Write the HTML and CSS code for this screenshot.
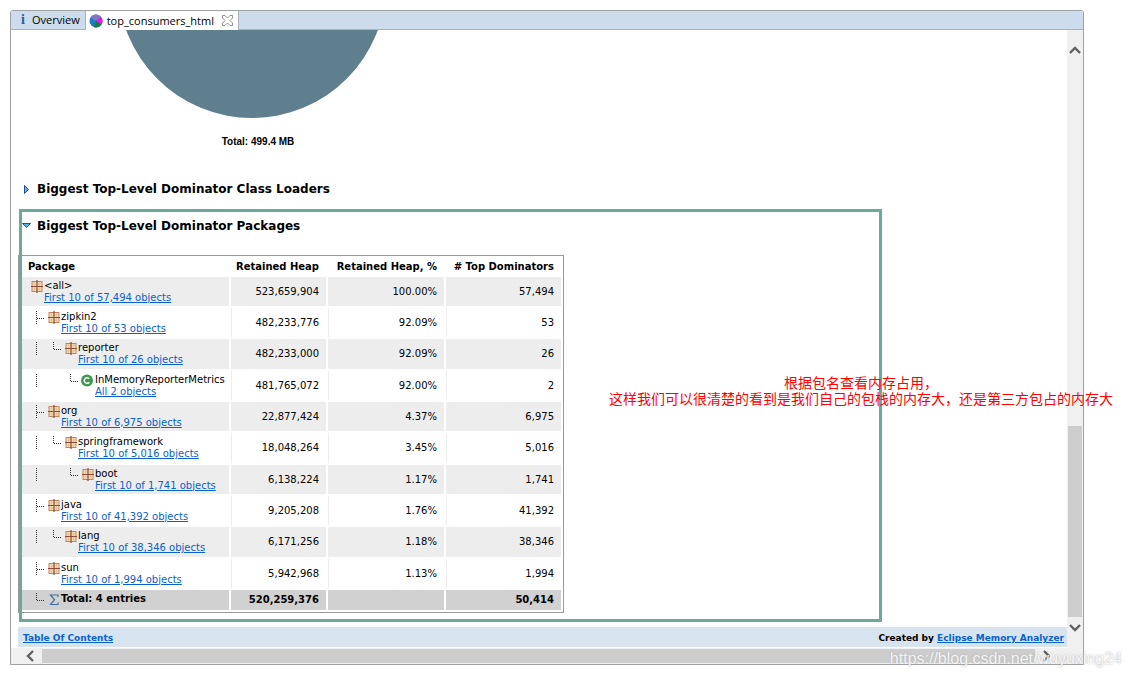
FILE: index.html
```html
<!DOCTYPE html>
<html lang="en">
<head>
<meta charset="utf-8">
<title>top_consumers_html</title>
<link rel="stylesheet" href="styles.css">
</head>
<body>
<svg class="defs" aria-hidden="true">
  <symbol id="pkg" viewBox="0 0 16 14">
    <rect x="4" y="1.500" width="10" height="10" fill="#f6dcb4" stroke="#bf8560"/>
    <path d="M6.500 2v9M11.500 2v9M4.500 4h9M4.500 9h9" stroke="#e3b98c" stroke-width=".6"/>
    <path d="M9 0v13M3 6.500h12" stroke="#8d4b38" stroke-width="1.200"/>
  </symbol>
  <symbol id="cls" viewBox="0 0 16 14">
    <circle cx="8" cy="6.500" r="6" fill="#3c9a4c"/>
    <path d="M10.300 4.800A2.800 2.800 0 1 0 10.300 8.200" fill="none" stroke="#fff" stroke-width="1.500"/>
  </symbol>
  <symbol id="sum" viewBox="0 0 16 14">
    <path d="M13 4V2H5.500L9.500 6.800L5.500 11.500H13V9.500" fill="none" stroke="#3f6fa5" stroke-width="1.200"/>
  </symbol>
  <symbol id="line" viewBox="0 0 20 16"><path d="M8.500 0v14" stroke="#333" stroke-dasharray="1 1"/></symbol>
  <symbol id="tee" viewBox="0 0 20 16"><path d="M8.500 0v14M9 7.500h9" stroke="#333" stroke-dasharray="1 1"/></symbol>
  <symbol id="elbow" viewBox="0 0 20 16"><path d="M8.500 0v8M9 7.500h9" stroke="#333" stroke-dasharray="1 1"/></symbol>
</svg>

<div class="window">
  <nav class="tabs">
    <button class="tab"><span class="info">i</span>Overview</button>
    <button class="tab active">
      <svg width="14" height="14" viewBox="0 0 14 14"><circle cx="7" cy="7" r="6.500" fill="#1c7cc4"/><path d="M7 7L1.500 3.500A6.500 6.500 0 0 1 12 3z" fill="#8377c4"/><path d="M7 7L12 3A6.500 6.500 0 0 1 12.500 10.500z" fill="#f412e8"/><path d="M7 7L12.500 10.500A6.500 6.500 0 0 1 5 13.200z" fill="#157a4c"/></svg>
      top_consumers_html
      <svg class="close" width="11" height="11" viewBox="0 0 11 11"><path d="M.5 .5h2.500L5.500 3L8 .5h2.500V3L8 5.500L10.500 8v2.500H8L5.500 8L3 10.500H.5V8L3 5.500L.5 3z" fill="#fff" stroke="#777" stroke-width=".8"/></svg>
    </button>
  </nav>

  <div class="view">
    <main class="report">
      <figure class="chart">
        <svg width="268" height="88" viewBox="0 0 268 88"><circle cx="134" cy="-46" r="134" fill="#607f8e"/></svg>
        <figcaption>Total: 499.4 MB</figcaption>
      </figure>

      <h2><svg class="closed" width="7" height="9" viewBox="0 0 7 9"><path d="M1.500 .5v8L5.500 4.500z" fill="#59b1de" stroke="#1f4f9d"/></svg>Biggest Top-Level Dominator Class Loaders</h2>
      <h2><svg width="9" height="6" viewBox="0 0 9 6"><path d="M.5 .5h8L4.500 4.500z" fill="#59b1de" stroke="#1f4f9d"/></svg>Biggest Top-Level Dominator Packages</h2>

      <table class="packages">
        <thead>
          <tr><th class="name">Package</th><th class="heap">Retained Heap</th><th class="percent">Retained Heap, %</th><th class="count"># Top Dominators</th></tr>
        </thead>
        <tbody>
          <tr><td><div class="node"><svg class="icon"><use href="#pkg"/></svg><div>&lt;all&gt;<a href="#">First 10 of 57,494 objects</a></div></div></td><td>523,659,904</td><td>100.00%</td><td>57,494</td></tr>
          <tr><td><div class="node"><svg class="guide"><use href="#tee" width="20" height="16"/></svg><svg class="icon"><use href="#pkg"/></svg><div>zipkin2<a href="#">First 10 of 53 objects</a></div></div></td><td>482,233,776</td><td>92.09%</td><td>53</td></tr>
          <tr><td><div class="node"><svg class="guide"><use href="#line" width="20" height="16"/></svg><svg class="guide"><use href="#elbow" width="20" height="16"/></svg><svg class="icon"><use href="#pkg"/></svg><div>reporter<a href="#">First 10 of 26 objects</a></div></div></td><td>482,233,000</td><td>92.09%</td><td>26</td></tr>
          <tr><td><div class="node"><svg class="guide"><use href="#line" width="20" height="16"/></svg><svg class="guide"></svg><svg class="guide"><use href="#elbow" width="20" height="16"/></svg><svg class="icon"><use href="#cls"/></svg><div>InMemoryReporterMetrics<a href="#">All 2 objects</a></div></div></td><td>481,765,072</td><td>92.00%</td><td>2</td></tr>
          <tr><td><div class="node"><svg class="guide"><use href="#tee" width="20" height="16"/></svg><svg class="icon"><use href="#pkg"/></svg><div>org<a href="#">First 10 of 6,975 objects</a></div></div></td><td>22,877,424</td><td>4.37%</td><td>6,975</td></tr>
          <tr><td><div class="node"><svg class="guide"><use href="#line" width="20" height="16"/></svg><svg class="guide"><use href="#elbow" width="20" height="16"/></svg><svg class="icon"><use href="#pkg"/></svg><div>springframework<a href="#">First 10 of 5,016 objects</a></div></div></td><td>18,048,264</td><td>3.45%</td><td>5,016</td></tr>
          <tr><td><div class="node"><svg class="guide"><use href="#line" width="20" height="16"/></svg><svg class="guide"></svg><svg class="guide"><use href="#elbow" width="20" height="16"/></svg><svg class="icon"><use href="#pkg"/></svg><div>boot<a href="#">First 10 of 1,741 objects</a></div></div></td><td>6,138,224</td><td>1.17%</td><td>1,741</td></tr>
          <tr><td><div class="node"><svg class="guide"><use href="#tee" width="20" height="16"/></svg><svg class="icon"><use href="#pkg"/></svg><div>java<a href="#">First 10 of 41,392 objects</a></div></div></td><td>9,205,208</td><td>1.76%</td><td>41,392</td></tr>
          <tr><td><div class="node"><svg class="guide"><use href="#line" width="20" height="16"/></svg><svg class="guide"><use href="#elbow" width="20" height="16"/></svg><svg class="icon"><use href="#pkg"/></svg><div>lang<a href="#">First 10 of 38,346 objects</a></div></div></td><td>6,171,256</td><td>1.18%</td><td>38,346</td></tr>
          <tr><td><div class="node"><svg class="guide"><use href="#tee" width="20" height="16"/></svg><svg class="icon"><use href="#pkg"/></svg><div>sun<a href="#">First 10 of 1,994 objects</a></div></div></td><td>5,942,968</td><td>1.13%</td><td>1,994</td></tr>
        </tbody>
        <tfoot>
          <tr><td><div class="node"><svg class="guide"><use href="#elbow" width="20" height="16"/></svg><svg class="icon"><use href="#sum"/></svg><div>Total: 4 entries</div></div></td><td>520,259,376</td><td></td><td>50,414</td></tr>
        </tfoot>
      </table>

      <footer class="footer"><a href="#">Table Of Contents</a><span>Created by <a href="#">Eclipse Memory Analyzer</a></span></footer>
      <div class="highlight"></div>
    </main>

    <div class="vbar">
      <button aria-label="Scroll up"><svg width="12" height="8" viewBox="0 0 12 8"><path d="M1 7L6 2L11 7" fill="none" stroke="#606060" stroke-width="2.400"/></svg></button>
      <span class="track"><span class="thumb"></span></span>
      <button aria-label="Scroll down"><svg width="12" height="8" viewBox="0 0 12 8"><path d="M1 1L6 6L11 1" fill="none" stroke="#606060" stroke-width="2.400"/></svg></button>
    </div>
  </div>

  <div class="hbar">
    <button aria-label="Scroll left"><svg width="8" height="12" viewBox="0 0 8 12"><path d="M7 1L2 6L7 11" fill="none" stroke="#606060" stroke-width="2.400"/></svg></button>
    <span class="thumb"></span>
    <button aria-label="Scroll right"><svg width="8" height="12" viewBox="0 0 8 12"><path d="M1 1L6 6L1 11" fill="none" stroke="#606060" stroke-width="2.400"/></svg></button>
  </div>
</div>

<p class="note" lang="zh">根据包名查看内存占用，<br>这样我们可以很清楚的看到是我们自己的包栈的内存大，还是第三方包占的内存大</p>
<p class="watermark">https://blog.csdn.net/wuyuxing24</p>
</body>
</html>
```
FILE: styles.css
```css
* { box-sizing: border-box; }

body {
  margin: 0;
  min-height: 100vh;
  padding: 10px 47px 12px 10px;
  display: flex;
  position: relative;
  background: #fff;
  color: #000;
  font: 10px/12px "DejaVu Sans", Verdana, sans-serif;
}

.defs { position: absolute; width: 0; height: 0; }
svg { display: block; flex: none; }
button { border: 0; padding: 0; background: none; font: inherit; color: inherit; }
a { color: #0a62c9; }

.window {
  flex: 1;
  display: flex;
  flex-direction: column;
  border: 1px solid #a0a0a0;
  border-radius: 3px 3px 0 0;
  overflow: hidden;
}

/* Tabs */
.tabs {
  display: flex;
  height: 19px;
  background: #cddcec;
  border-bottom: 1px solid #a9b1ba;
}
.tab {
  display: flex;
  align-items: center;
  gap: 4px;
  height: 18px;
  padding: 0 5px 0 7px;
  font: 11px/18px "Open Sans", "Segoe UI", sans-serif;
}
.tab.active {
  height: 19px;
  padding: 0 5px 0 3px;
  background: #fff;
  border-left: 1px solid #a9b1ba;
  border-right: 1px solid #a9b1ba;
}
.info {
  width: 10px;
  color: #1d62a8;
  font: bold 14px/18px "Liberation Serif", serif;
}
.close { margin-left: 4px; }

/* Report */
.view { flex: 1; display: flex; }
.report {
  flex: 1;
  display: flex;
  flex-direction: column;
  align-items: flex-start;
  position: relative;
  padding: 0 0 1px 7px;
}
.chart { margin: 0 0 33px 100px; }
.chart figcaption {
  padding: 18px 0 0 12px;
  text-align: center;
  font: bold 10px/12px "Liberation Sans", Tahoma, sans-serif;
}
h2 {
  display: flex;
  align-items: center;
  gap: 6px;
  margin: 0 0 21px 4px;
  font-size: 12px;
  line-height: 16px;
}
h2 .closed { margin: 0 1px; }

.packages {
  border: 1px solid #999;
  border-spacing: 2px;
}
.packages th, .packages td { padding: 0 7px 0 4px; text-align: right; white-space: nowrap; }
.packages th { height: 17px; }
.packages td { height: 29px; border-left: 1px solid #ededed; }
.packages th:first-child, .packages td:first-child { padding: 0 4px 0 7px; text-align: left; border-left: 0; }
.packages tbody tr:nth-child(3n) td { height: 30px; }
.packages tbody tr:nth-child(odd) td { background: #ededed; }
.packages tfoot td { height: 20px; border-color: #d1d1d1; background: #d1d1d1; font-weight: bold; }
.name { width: 208px; }
.heap { width: 95px; }
.percent { width: 116px; }
.count { width: 115px; }

.node { display: flex; }
.node a { display: block; }
.icon { width: 16px; height: 14px; }
.guide { width: 17px; height: 16px; }
tfoot .node { height: 14px; }

.footer {
  align-self: stretch;
  display: flex;
  justify-content: space-between;
  margin-top: auto;
  padding: 5px 3px 3px 5px;
  background: #d7e4ef;
  font-size: 9px;
  font-weight: bold;
}

/* Scrollbars */
.vbar {
  width: 16px;
  display: flex;
  flex-direction: column;
  align-items: center;
  padding: 14px 0;
  background: #f0f0f0;
}
.track { flex: 1; align-self: stretch; display: flex; align-items: flex-end; padding-bottom: 5px; }
.vbar .thumb { width: 14px; height: 34%; margin: 0 1px; background: #cdcdcd; }
.vbar button, .hbar button { height: 12px; display: flex; align-items: center; }
.hbar {
  height: 16px;
  display: flex;
  align-items: center;
  gap: 8px;
  padding: 0 32px 0 15px;
  background: #f0f0f0;
}
.hbar .thumb { flex: 1; height: 14px; background: #cdcdcd; }

/* Annotations drawn over the window */
.highlight {
  position: absolute;
  left: 8px;
  right: 185px;
  top: 179px;
  bottom: 26px;
  border: 3px solid #6aaa9d;
}
.note {
  position: absolute;
  right: 18px;
  top: 374px;
  margin: 0;
  color: #f00;
  text-align: center;
  font: 14px/16px "Noto Sans CJK SC", sans-serif;
}
.watermark {
  position: absolute;
  right: 9px;
  bottom: 8px;
  margin: 0;
  color: rgba(255, 255, 255, .85);
  text-shadow: 0 0 2px #aaa;
  font: 16px/20px "Liberation Sans", Arial, sans-serif;
}
```
